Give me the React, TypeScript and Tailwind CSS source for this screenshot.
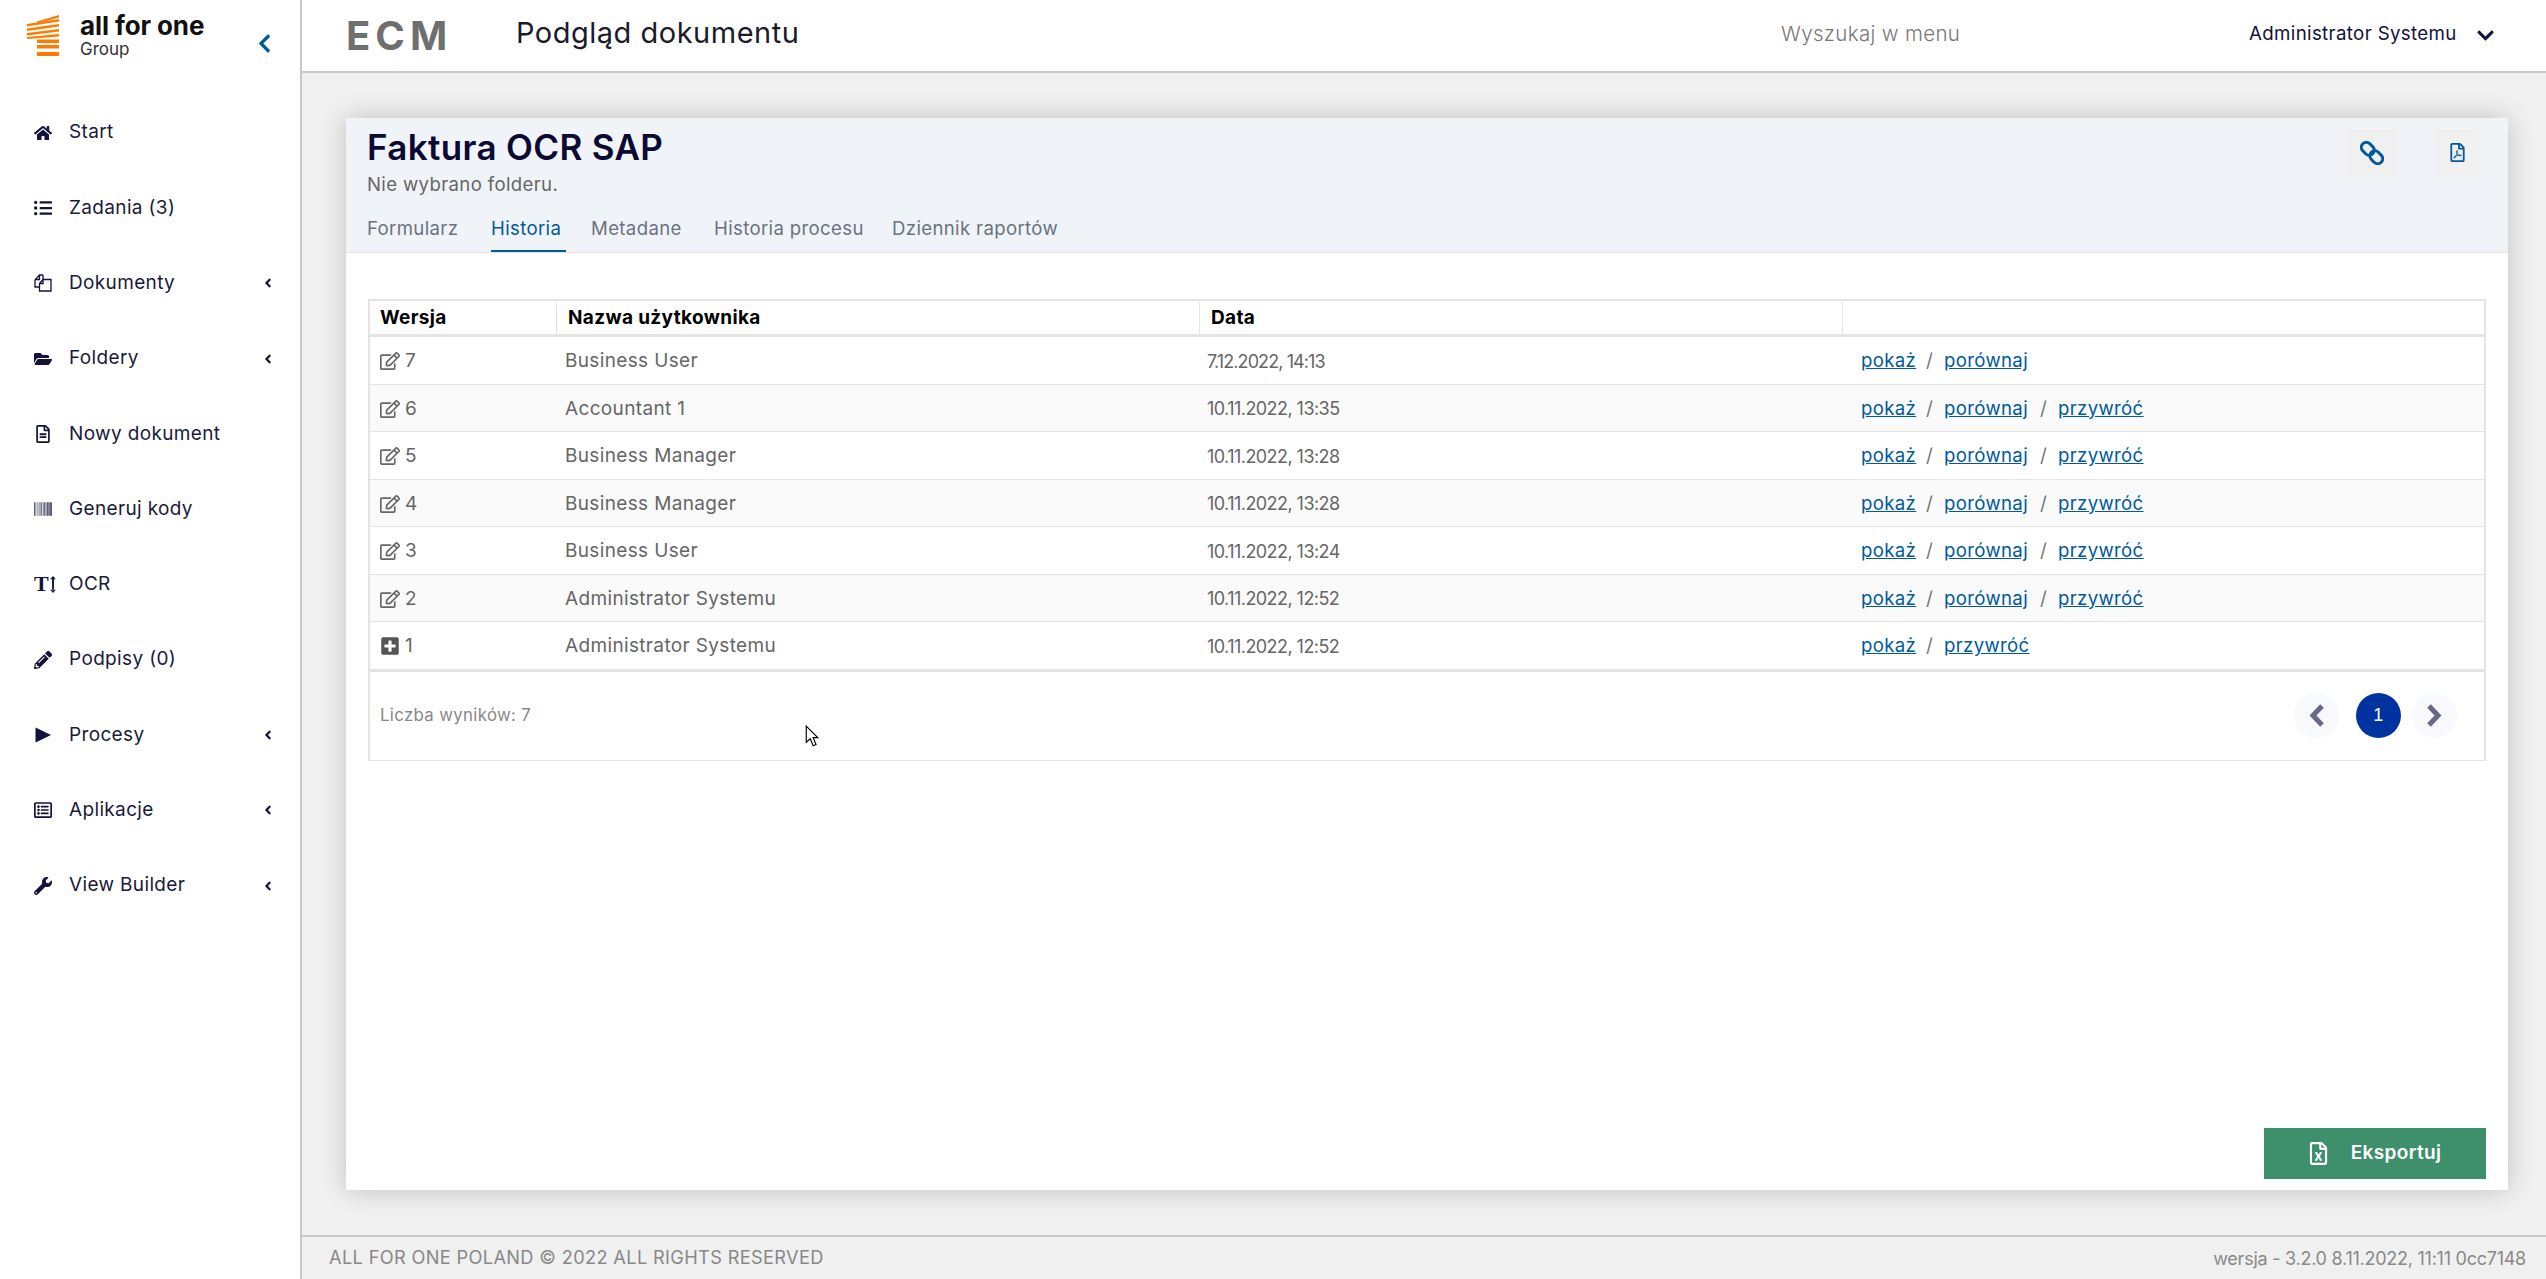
import React from "react";
import {
  FaHome, FaListUl, FaFolderOpen, FaRegFileAlt, FaBarcode,
  FaPencilAlt, FaRegListAlt, FaWrench, FaChevronLeft, FaChevronDown, FaAngleLeft,
  FaRegFilePdf, FaRegFileExcel, FaRegEdit, FaPlusSquare,
} from "react-icons/fa";

type IconT = React.ComponentType<{ className?: string }>;

const Docs: IconT = ({ className }) => (
  <svg viewBox="0 0 18 18" className={className} fill="none" stroke="currentColor" strokeWidth="1.3">
    <path d="M9 1 H5.5 L1 6 V13 H5.5" />
    <path d="M5.5 1 V5.5 H1" />
    <path d="M12 5.5 H9 L5.5 9.5 V17 H17 V5.5 Z" />
    <path d="M9 5.5 V9.5 H5.5" />
    <path d="M9 1 V5.5" />
  </svg>
);
const PlayIcon: IconT = ({ className }) => (
  <svg viewBox="0 0 18 18" className={className} fill="currentColor">
    <polygon points="1.5,1.5 17,9 1.5,16.5" />
  </svg>
);
const TextHeightIcon: IconT = () => (
  <span className="flex items-center h-[18px] w-[18px] text-[#12123a]">
    <span className="font-['Liberation_Serif',serif] font-bold text-[22px] leading-none tracking-normal">T</span>
    <svg viewBox="0 0 6 18" className="w-[6px] h-[17px] ml-[1px] shrink-0" fill="currentColor">
      <path d="M2 3 H4 V15 H2 Z M0 3.5 L3 0 L6 3.5 Z M0 14.5 L3 18 L6 14.5 Z" />
    </svg>
  </span>
);

const nav: [IconT, string, boolean][] = [
  [FaHome, "Start", false],
  [FaListUl, "Zadania (3)", false],
  [Docs, "Dokumenty", true],
  [FaFolderOpen, "Foldery", true],
  [FaRegFileAlt, "Nowy dokument", false],
  [FaBarcode, "Generuj kody", false],
  [TextHeightIcon, "OCR", false],
  [FaPencilAlt, "Podpisy (0)", false],
  [PlayIcon, "Procesy", true],
  [FaRegListAlt, "Aplikacje", true],
  [FaWrench, "View Builder", true],
];

const rows = [
  ["7", "Business User", "7.12.2022, 14:13", "first"],
  ["6", "Accountant 1", "10.11.2022, 13:35", "all"],
  ["5", "Business Manager", "10.11.2022, 13:28", "all"],
  ["4", "Business Manager", "10.11.2022, 13:28", "all"],
  ["3", "Business User", "10.11.2022, 13:24", "all"],
  ["2", "Administrator Systemu", "10.11.2022, 12:52", "all"],
  ["1", "Administrator Systemu", "10.11.2022, 12:52", "last"],
];

function Logo() {
  return (
    <svg viewBox="0 0 32 42" className="w-[32px] h-[42px] shrink-0" fill="#ff7a00">
      <polygon points="10,6.5 32,0 32,2.5 10,8.5" />
      <polygon points="0,9 32,4 32,6.5 0,11.5" />
      <polygon points="0,13.5 32,9 32,11.5 0,16" />
      <polygon points="0,18 32,14 32,16.5 0,20.5" />
      <polygon points="0,22 32,19 32,21.5 0,24" />
      <rect x="10" y="24.5" width="22" height="3.5" />
      <rect x="10" y="30" width="22" height="3.5" />
      <rect x="10" y="37" width="22" height="4" />
    </svg>
  );
}

function ChainIcon() {
  return (
    <svg viewBox="0 0 24 24" className="w-[24px] h-[24px]" fill="none" stroke="currentColor" strokeWidth="3">
      <g transform="rotate(45 12 12)">
        <rect x="-1" y="7" width="14" height="10" rx="5" />
        <rect x="11" y="7" width="14" height="10" rx="5" />
      </g>
    </svg>
  );
}

function PageChevron({ dir }: { dir: "l" | "r" }) {
  return (
    <svg viewBox="0 0 15 23" className="w-[15px] h-[23px]" fill="none" stroke="#666a86" strokeWidth="5">
      <polyline points={dir === "l" ? "13,2 4,11.5 13,21" : "2,2 11,11.5 2,21"} />
    </svg>
  );
}

function Sep() {
  return <span className="w-[29px] text-center text-[#777]">/</span>;
}
function A({ children, w }: { children: React.ReactNode; w: string }) {
  return <a className={`${w} text-[#005a9c] underline text-[18.6px]`}>{children}</a>;
}

export default function App() {
  return (
    <div className="relative flex h-[1279px] w-full overflow-hidden bg-[#f0f0f0] font-['Inter',sans-serif] tracking-[0.35px]">
      <aside className="w-[302px] shrink-0 bg-white border-r-2 border-[#c8c8c8] flex flex-col">
        <div className="h-[95px] flex items-start pl-[27px] pt-[15px] shrink-0">
          <Logo />
          <div className="ml-[21px] w-[160px] -mt-[2px]">
            <div className="text-[26px] leading-[26px] font-bold text-[#111] tracking-[-0.1px]">all for one</div>
            <div className="text-[17px] leading-[21px] text-[#333] tracking-normal">Group</div>
          </div>
          <FaChevronLeft className="text-[#005a9c] text-[21px] mt-[18px] ml-[14px]" />
        </div>
        <nav className="flex flex-col text-[#1a1a3a]">
          {nav.map(([Icon, label, arrow]) => (
            <div key={label} className="h-[75.3px] flex items-center pl-[34px] pr-[25px] shrink-0">
              <span className="w-[35px] shrink-0 flex"><Icon className="w-[18px] h-[18px] text-[#12123a]" /></span>
              <span className="flex-1 text-[19px]">{label}</span>
              {arrow && <FaAngleLeft className="text-[14px] text-[#12123a]" />}
            </div>
          ))}
        </nav>
      </aside>

      <div className="flex-1 min-w-0 flex flex-col">
        <header className="h-[73px] shrink-0 bg-white border-b-2 border-[#c8c8c8] flex items-center pl-[44px]">
          <div className="w-[170px] text-[40px] font-bold text-[#6f6f6f] tracking-[5px] leading-none">ECM</div>
          <div className="text-[29px] text-[#1a1a2a] w-[1265px] tracking-[0.5px] mb-[5px]">Podgląd dokumentu</div>
          <div className="text-[20.5px] text-[#777] font-light w-[468px] mb-[3px]">Wyszukaj w menu</div>
          <div className="text-[18.7px] text-[#12123a] w-[227px] mb-[2px]">Administrator Systemu</div>
          <FaChevronDown className="text-[#12123a] text-[19px]" />
        </header>

        <main className="flex-1 min-h-0 pl-[44px] pr-[38px] py-[45px]">
          <section className="h-full bg-white shadow-[0_0_24px_rgba(0,0,0,0.2)] flex flex-col">
            <div className="relative h-[135px] shrink-0 bg-[#f0f4f8] border-b border-[#e2e2e2] pl-[21px] pt-[9px]">
              <div className="text-[35px] leading-[40px] font-semibold text-[#0a0a33]">Faktura OCR SAP</div>
              <div className="mt-[6px] text-[18.6px] leading-[22px] text-[#666]">Nie wybrano folderu.</div>
              <div className="mt-[10px] flex gap-[31px] text-[18.6px] text-[#6b7280]">
                <span className="pt-[10px] h-[47px] leading-[26px] w-[93px] whitespace-nowrap">Formularz</span>
                <span className="pt-[10px] h-[47px] leading-[26px] w-[75px] -mr-[6px] whitespace-nowrap text-[#005a9c] border-b-2 border-[#005a9c]">Historia</span>
                <span className="pt-[10px] h-[47px] leading-[26px] w-[92px] whitespace-nowrap">Metadane</span>
                <span className="pt-[10px] h-[47px] leading-[26px] w-[147px] whitespace-nowrap">Historia procesu</span>
                <span className="pt-[10px] h-[47px] leading-[26px] w-[168px] whitespace-nowrap">Dziennik raportów</span>
              </div>
              <div className="absolute right-[29px] top-[11px] flex gap-[38px] text-[#005a9c]">
                <span className="w-[51px] h-[47px] bg-[#f0f0f0] flex items-center justify-center"><ChainIcon /></span>
                <span className="w-[44px] h-[47px] bg-[#f0f0f0] flex items-center justify-center"><FaRegFilePdf className="text-[19px]" /></span>
              </div>
            </div>

            <div className="mx-[22px] mt-[46px] border-2 border-b border-[#e4e4e4] text-[19px] text-[#666]">
              <div className="grid grid-cols-[187px_643px_643px_1fr] h-[36px] pt-[1px] border-b-[3px] border-[#e4e4e4] font-bold text-black">
                <div className="pl-[10px] flex items-center border-r border-[#e4e4e4]">Wersja</div>
                <div className="pl-[11px] flex items-center border-r border-[#e4e4e4]">Nazwa użytkownika</div>
                <div className="pl-[11px] flex items-center border-r border-[#e4e4e4]">Data</div>
                <div />
              </div>
              {rows.map(([v, u, d, k], i) => (
                <div key={v} className={`grid grid-cols-[187px_643px_643px_1fr] h-[47.5px] pt-[2px] items-center border-b border-[#e4e4e4] ${i % 2 ? "bg-[#fafafa]" : "bg-white"}`}>
                  <div className="pl-[10px] flex items-center gap-[5px]">
                    {k === "last" ? <FaPlusSquare className="text-[20px] text-[#555]" /> : <FaRegEdit className="text-[20px] text-[#666]" />}
                    <span>{v}</span>
                  </div>
                  <div className="pl-[8px]">{u}</div>
                  <div className={`pl-[7px] text-[18px] ${i === 0 ? "tracking-[-0.9px]" : "tracking-[-0.55px]"}`}>{d}</div>
                  <div className="pl-[18px] flex items-center">
                    <A w="w-[54px]">pokaż</A>
                    <Sep />
                    {k === "last" ? <A w="w-[82px]">przywróć</A> : <A w="w-[85px]">porównaj</A>}
                    {k === "all" && <><Sep /><A w="w-[82px]">przywróć</A></>}
                  </div>
                </div>
              ))}
              <div className="h-[90px] border-t-[2px] border-[#e4e4e4] flex items-center pl-[10px] text-[#888] text-[16.8px]">
                <span className="flex-1">Liczba wyników: 7</span>
                <div className="flex items-center mr-[27px]">
                  <span className="w-[45px] h-[45px] rounded-full bg-[#f8f9fc] flex items-center justify-center"><PageChevron dir="l" /></span>
                  <span className="ml-[17px] w-[45px] h-[45px] rounded-full bg-[#0033a0] flex items-center justify-center text-white text-[18px] font-['Liberation_Sans',sans-serif]">1</span>
                  <span className="ml-[11px] w-[45px] h-[45px] rounded-full bg-[#f8f9fc] flex items-center justify-center"><PageChevron dir="r" /></span>
                </div>
              </div>
            </div>

            <button className="mt-auto mb-[11px] mr-[22px] self-end w-[222px] h-[51px] pr-[2px] bg-[#3e8f6b] text-white font-semibold text-[19px] flex items-center justify-center gap-[21px]">
              <FaRegFileExcel className="text-[23px]" />
              <span>Eksportuj</span>
            </button>
          </section>
        </main>

        <footer className="h-[44px] shrink-0 border-t-2 border-[#c8c8c8] flex items-center justify-between pl-[27px] pr-[20px] text-[18.2px] text-[#888]">
          <span>ALL FOR ONE POLAND © 2022 ALL RIGHTS RESERVED</span>
          <span className="text-[18px] tracking-[-0.25px]">wersja - 3.2.0 8.11.2022, 11:11 0cc7148</span>
        </footer>
      </div>

      <svg viewBox="0 0 12 20" className="absolute left-[805px] top-[725px] w-[14px] h-[23px]" fill="#fff" stroke="#000" strokeWidth="1">
        <path d="M1 1 L1 15 L4.5 12 L7 18 L9.5 17 L7 11 L11 11 Z" />
      </svg>
    </div>
  );
}
